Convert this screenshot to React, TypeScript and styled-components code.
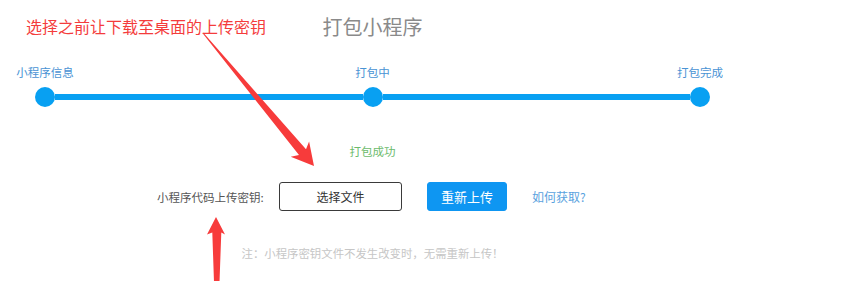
import React from "react";
import styled, { createGlobalStyle } from "styled-components";

const Global = createGlobalStyle`
  html, body { margin: 0; padding: 0; background: #fff; }
  body {
    font-family: "Noto Sans CJK SC", "Noto Sans", "Liberation Sans", sans-serif;
    width: 859px; height: 281px; overflow: hidden;
  }
`;

const Page = styled.div`
  position: relative;
  width: 859px;
  height: 281px;
`;

const Content = styled.div`
  width: 745px;
  display: flex;
  flex-direction: column;
`;

const Title = styled.h1`
  margin: 13px 0 0;
  height: 28px;
  line-height: 28px;
  font-size: 20px;
  font-weight: 400;
  color: #8a8a8a;
  text-align: center;
`;

const Labels = styled.div`
  margin-top: 23px;
  display: flex;
  justify-content: space-between;
`;

const StepLabel = styled.div`
  width: 90px;
  text-align: center;
  font-size: 11.5px;
  line-height: 16px;
  color: #4a93d4;
`;

const Track = styled.div`
  margin-top: 7px;
  padding: 0 35px;
  display: flex;
  align-items: center;
`;

const Dot = styled.div`
  width: 20px;
  height: 20px;
  border-radius: 50%;
  background: #08a0f2;
  flex: none;
`;

const Bar = styled.div`
  flex: 1;
  height: 6px;
  background: #08a0f2;
`;

const Status = styled.div`
  margin-top: 36px;
  text-align: center;
  font-size: 11.5px;
  line-height: 16px;
  color: #6cbb6c;
`;

const UploadRow = styled.div`
  margin-top: 23px;
  padding-left: 157px;
  display: flex;
  align-items: center;
`;

const FieldLabel = styled.span`
  font-size: 11.5px;
  color: #555;
  margin-right: 16px;
  width: 106px;
  white-space: nowrap;
`;

const Button = styled.button<{ $primary?: boolean; $w: number }>`
  box-sizing: border-box;
  width: ${(p) => p.$w}px;
  height: 29px;
  border-radius: 3px;
  font-family: inherit;
  font-size: ${(p) => (p.$primary ? "13px" : "12px")};
  padding: 0;
  cursor: pointer;
  border: 1px solid ${(p) => (p.$primary ? "#0e96f2" : "#3a3a3a")};
  background: ${(p) => (p.$primary ? "#0e96f2" : "#fff")};
  color: ${(p) => (p.$primary ? "#fff" : "#333")};
  margin-right: 25px;
`;

const HelpLink = styled.a`
  font-size: 12px;
  color: #5aa2de;
  text-decoration: none;
`;

const Note = styled.div`
  margin-top: 34px;
  text-align: center;
  font-size: 11.4px;
  line-height: 16px;
  color: #c6c6c6;
`;

const Annotation = styled.div`
  position: absolute;
  left: 26px;
  top: 15px;
  font-size: 16px;
  line-height: 22px;
  color: #f43c3c;
  white-space: nowrap;
`;

const Arrows = styled.svg`
  position: absolute;
  left: 0;
  top: 0;
  pointer-events: none;
`;

export default function App() {
  return (
    <Page>
      <Global />
      <Content>
        <Title>打包小程序</Title>
        <Labels>
          <StepLabel>小程序信息</StepLabel>
          <StepLabel>打包中</StepLabel>
          <StepLabel>打包完成</StepLabel>
        </Labels>
        <Track>
          <Dot />
          <Bar />
          <Dot />
          <Bar />
          <Dot />
        </Track>
        <Status>打包成功</Status>
        <UploadRow>
          <FieldLabel>小程序代码上传密钥:</FieldLabel>
          <Button $w={123}>选择文件</Button>
          <Button $primary $w={80}>重新上传</Button>
          <HelpLink href="#">如何获取?</HelpLink>
        </UploadRow>
        <Note>注：小程序密钥文件不发生改变时，无需重新上传！</Note>
      </Content>
      <Annotation>选择之前让下载至桌面的上传密钥</Annotation>
      <Arrows width="859" height="281" viewBox="0 0 859 281">
        <polygon
          fill="#f73b3b"
          points="202.6,33.3 299,155.1 290.7,156.8 314,166 309.1,141.4 306,149.3 203.4,32.7"
        />
        <polygon
          fill="#f73b3b"
          points="216,217 225,234.5 221.3,232.5 219.5,282 214,282 212.3,232.5 207,234.5"
        />
      </Arrows>
    </Page>
  );
}
